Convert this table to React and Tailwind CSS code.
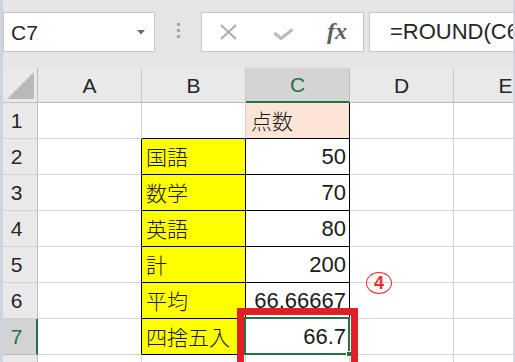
import React from 'react'

const GRID = 'border-[#d4d4d4]'

const rows = [
  { n: 1, b: '', c: '点数' },
  { n: 2, b: '国語', c: '50' },
  { n: 3, b: '数学', c: '70' },
  { n: 4, b: '英語', c: '80' },
  { n: 5, b: '計', c: '200' },
  { n: 6, b: '平均', c: '66.66667' },
  { n: 7, b: '四捨五入', c: '66.7' },
]

function Toolbar() {
  return (
    <div className="h-[68px] shrink-0 bg-[#e6e6e6] pt-[12px] flex items-start">
      {/* name box */}
      <div className="w-[152px] h-[40px] bg-white border border-[#c6c6c6] flex items-center justify-between pl-[7px] pr-[9px]">
        <span className="text-[21px] text-[#262626] leading-none">C7</span>
        <svg width="8" height="5" viewBox="0 0 8 5">
          <path d="M0 0 H8 L4 4.5 Z" fill="#6b6b6b" />
        </svg>
      </div>
      {/* grip dots */}
      <div className="w-[46px] h-[40px] flex flex-col items-center justify-center gap-[3px] pb-[3px]">
        <div className="w-[3px] h-[3px] bg-[#a6a6a6]" />
        <div className="w-[3px] h-[3px] bg-[#a6a6a6]" />
        <div className="w-[3px] h-[3px] bg-[#a6a6a6]" />
      </div>
      {/* cancel / enter / fx */}
      <div className="w-[163px] h-[40px] bg-white border border-[#c6c6c6] flex items-center pl-[18px]">
        <svg width="17" height="16" viewBox="0 0 17 16">
          <path d="M1 1 L16 15 M16 1 L1 15" stroke="#ababab" strokeWidth="2" />
        </svg>
        <svg className="ml-[36px] mt-[4px]" width="21" height="12" viewBox="0 0 21 12">
          <path d="M1.5 5 L8 10.5 L19.5 1.5" stroke="#bdbdbd" strokeWidth="3.2" fill="none" />
        </svg>
        <span className="ml-[33px] font-['Liberation_Serif',serif] italic font-bold text-[24px] leading-none text-[#5f5f5f] -mt-[2px]">
          fx
        </span>
      </div>
      {/* formula input, text runs past the window edge */}
      <div className="ml-[5px] flex-1 min-w-0 h-[40px] bg-white border-y border-l border-[#c6c6c6] flex items-center pl-[20px] overflow-hidden whitespace-nowrap">
        <span className="text-[22px] text-[#262626] leading-none">=ROUND(C6,1)</span>
      </div>
    </div>
  )
}

function HeaderRow() {
  const cols = ['A', 'B', 'C', 'D', 'E']
  return (
    <div className="flex h-[35px] shrink-0">
      <div className="w-[35px] shrink-0 h-full bg-[#e9e9e9] border-r border-b border-[#bdbdbd] flex items-end justify-end pr-[3px] pb-[3px]">
        <svg width="27" height="27" viewBox="0 0 27 27">
          <path d="M27 0 V27 H0 Z" fill="#b9b9b9" />
        </svg>
      </div>
      {cols.map((c) =>
        c === 'C' ? (
          <div
            key={c}
            className="w-[104px] shrink-0 h-full bg-[#d4d4d4] border-r border-[#bdbdbd] border-b-2 border-b-[#217346] flex items-center justify-center text-[21px] text-[#217346] leading-none"
          >
            {c}
          </div>
        ) : (
          <div
            key={c}
            className="w-[104px] shrink-0 h-full bg-[#e9e9e9] border-r border-b border-[#c9c9c9] border-b-[#bdbdbd] flex items-center justify-center text-[21px] text-[#262626] leading-none"
          >
            {c}
          </div>
        )
      )}
    </div>
  )
}

function Row({ n, b, c }) {
  const first = n === 1
  const sel = n === 7
  return (
    <div className="flex h-[36px] shrink-0">
      {sel ? (
        <div className="w-[35px] shrink-0 h-full bg-[#d4d4d4] border-r-2 border-r-[#217346] border-b border-b-[#bdbdbd] flex items-center justify-center pr-[6px] text-[21px] text-[#217346] leading-none">
          {n}
        </div>
      ) : (
        <div className="w-[35px] shrink-0 h-full bg-[#e9e9e9] border-r border-b border-[#bdbdbd] border-b-[#d0d0d0] flex items-center justify-center pr-[7px] text-[21px] text-[#262626] leading-none">
          {n}
        </div>
      )}

      {/* A */}
      <div
        className={
          first
            ? `w-[104px] shrink-0 h-full border-r border-b ${GRID}`
            : 'w-[104px] shrink-0 h-full border-r border-b border-r-black border-b-[#d4d4d4]'
        }
      />

      {/* B */}
      {first ? (
        <div className="w-[104px] shrink-0 h-full border-r border-b border-r-[#d4d4d4] border-b-black" />
      ) : (
        <div className="w-[104px] shrink-0 h-full bg-[#ffff00] border-r border-b border-black flex items-center pl-[4px] text-[21px] text-[#1a1a1a] leading-none font-light font-['Noto_Sans_CJK_JP',sans-serif] whitespace-nowrap">
          {b}
        </div>
      )}

      {/* C */}
      {first ? (
        <div className="w-[104px] shrink-0 h-full bg-[#fce4d6] border-r border-b border-black flex items-center pl-[5px] text-[21px] text-[#1a1a1a] leading-none font-light font-['Noto_Sans_CJK_JP',sans-serif]">
          {c}
        </div>
      ) : (
        <div className="relative w-[104px] shrink-0 h-full bg-white border-r border-b border-black flex items-center justify-end pr-[3px] text-[22px] text-[#1a1a1a] leading-none whitespace-nowrap">
          {c}
          {sel && (
            <>
              <div className="absolute -left-[2px] -top-[2px] -right-[1px] -bottom-[1px] border-2 border-[#217346]" />
              <div className="absolute -right-[3px] -bottom-[3px] w-[6px] h-[6px] bg-[#217346] border border-white" />
            </>
          )}
        </div>
      )}

      {/* D, E */}
      <div className={`w-[104px] shrink-0 h-full border-r border-b ${GRID}`} />
      <div className={`w-[104px] shrink-0 h-full border-r border-b ${GRID}`} />
    </div>
  )
}

export default function App() {
  return (
    <div className="w-[515px] h-[362px] overflow-hidden flex bg-white font-['Liberation_Sans','Noto_Sans_CJK_JP',sans-serif]">
      <div className="w-[3px] shrink-0 bg-[#cdd4df]" />
      <div className="relative flex-1 min-w-0 flex flex-col overflow-hidden">
        <Toolbar />
        <HeaderRow />
        {rows.map((r) => (
          <Row key={r.n} {...r} />
        ))}
        <div className="flex h-[36px] shrink-0">
          <div className="w-[35px] shrink-0 h-full bg-[#e9e9e9] border-r border-[#bdbdbd]" />
          <div className={`w-[104px] shrink-0 h-full border-r ${GRID}`} />
          <div className={`w-[104px] shrink-0 h-full border-r ${GRID}`} />
          <div className={`w-[104px] shrink-0 h-full border-r ${GRID}`} />
          <div className={`w-[104px] shrink-0 h-full border-r ${GRID}`} />
        </div>

        {/* annotation: circled number */}
        <div className="absolute left-[363px] top-[272px] w-[26px] h-[22px] rounded-[50%] border-[1.5px] border-[#e5322d] flex items-center justify-center text-[18px] font-semibold text-[#e5322d] leading-none">
          4
        </div>
        {/* annotation: red highlight box */}
        <div className="absolute left-[234px] top-[308px] w-[121px] h-[62px] border-[7px] border-[#e21f26]" />
      </div>
      <div className="w-[2px] shrink-0 bg-[#d8d8e4]" />
    </div>
  )
}
